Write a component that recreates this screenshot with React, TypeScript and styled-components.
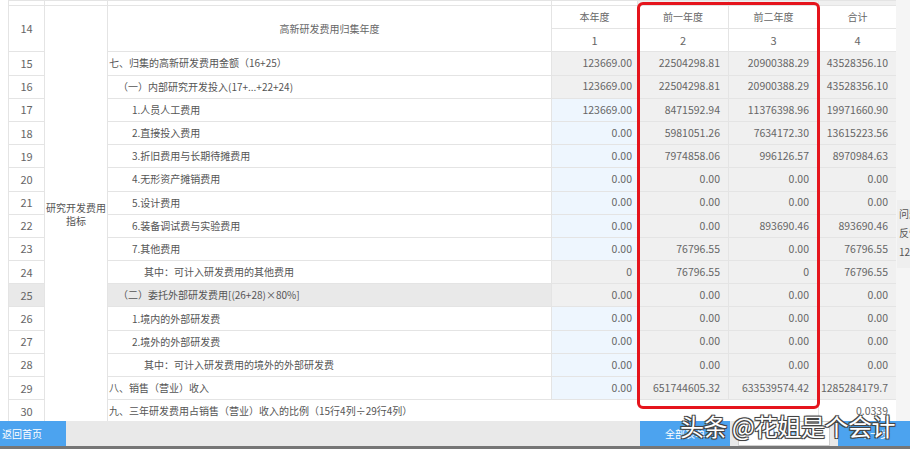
import React from 'react';
import styled, { createGlobalStyle } from 'styled-components';

const GlobalStyle = createGlobalStyle`
  html, body {
    margin: 0;
    padding: 0;
    overflow: hidden;
    background: #ffffff;
  }
  body {
    font-family: "Noto Sans CJK SC", "Noto Sans", sans-serif;
  }
`;

const Page = styled.div`
  position: relative;
  width: 910px;
  height: 449px;
  display: flex;
  flex-direction: column;
  overflow: hidden;
  background: #ffffff;
`;

const Main = styled.div`
  height: 421px;
  display: flex;
  overflow: hidden;
`;

const SheetWrap = styled.div`
  flex: none;
  width: 888px;
  padding-left: 8px;
`;

const Gutter = styled.div`
  flex: 1;
  background: #f5f5f5;
`;

const Sheet = styled.table`
  width: 888px;
  border-collapse: collapse;
  table-layout: fixed;
  color: #666;
`;

type Tone = 'white' | 'gray' | 'blue' | 'dark';

const toneColor: Record<Tone, string> = {
  white: '#ffffff',
  gray: '#f0f0f0',
  blue: '#eef6fe',
  dark: '#e9e9e9',
};

const Row = styled.tr<{ $h?: number }>`
  height: ${(p) => p.$h ?? 23.2}px;
`;

const Cell = styled.td<{ $tone?: Tone; $align?: 'left' | 'center' | 'right'; $pad?: number }>`
  border: 1px solid #e4e4e4;
  padding: 0 ${(p) => (p.$align === 'right' ? p.$pad ?? 8 : 0)}px 0
    ${(p) => (p.$align === 'left' ? p.$pad ?? 0 : 0)}px;
  background: ${(p) => toneColor[p.$tone ?? 'white']};
  text-align: ${(p) => p.$align ?? 'center'};
  font-size: 10.5px;
  line-height: 1;
  white-space: nowrap;
  overflow: hidden;
  color: #666;
`;

const NoCell = styled(Cell)`
  font-size: 11px;
  color: #666;
`;

const LabelCell = styled(Cell)`
  font-size: 10px;
  color: #555;
`;

const HeadCell = styled(Cell)`
  font-size: 10px;
  color: #666;
`;

const GroupCell = styled(Cell)`
  font-size: 10px;
  color: #555;
  white-space: normal;
  line-height: 13px;
  vertical-align: middle;
`;

const BottomBar = styled.div`
  height: 25px;
  display: flex;
  align-items: stretch;
  background: #e9e9e9;
`;

const Taskline = styled.div`
  height: 3px;
  background: #767676;
`;

const Button = styled.button<{ $light?: boolean; $w: number }>`
  width: ${(p) => p.$w}px;
  border: ${(p) => (p.$light ? '1px solid #cfcfcf' : 'none')};
  background: ${(p) => (p.$light ? '#ffffff' : '#4ca3ef')};
  color: ${(p) => (p.$light ? '#4ca3ef' : '#ffffff')};
  font-family: inherit;
  font-size: 10px;
  padding: 0;
  cursor: pointer;
`;

const HomeButton = styled(Button)`
  text-align: left;
  padding-left: 2px;
`;

const Spacer = styled.div`
  flex: 1;
`;

const RightButtons = styled.div`
  display: flex;
  gap: 8px;
  margin-right: -2px;
`;

const Highlight = styled.div`
  position: absolute;
  left: 637px;
  top: 2px;
  width: 177px;
  height: 401px;
  border: 3px solid #e5141c;
  border-radius: 6px;
  pointer-events: none;
`;

const SideTab = styled.div`
  position: absolute;
  left: 897px;
  top: 200px;
  width: 30px;
  height: 68px;
  padding: 4px 0 0 2px;
  box-sizing: border-box;
  background: #efefef;
  color: #555;
  font-size: 10px;
  line-height: 19px;
`;

const Watermark = styled.div`
  position: absolute;
  left: 680px;
  top: 410px;
  font-size: 24px;
  line-height: 32px;
  color: #ffffff;
  white-space: nowrap;
  letter-spacing: -0.5px;
  text-shadow: -1px -1px 0 #444, 1px -1px 0 #444, -1px 1px 0 #444, 1px 1px 0 #444,
    0 0 2px #333;
  pointer-events: none;
`;

type Line = {
  no: number;
  label: string;
  level: number;
  values: [string, string, string, string];
  own?: boolean;
  shaded?: boolean;
};

const lines: Line[] = [
  { no: 15, label: '七、归集的高新研发费用金额（16+25）', level: 0, values: ['123669.00', '22504298.81', '20900388.29', '43528356.10'] },
  { no: 16, label: '（一）内部研究开发投入(17+...+22+24)', level: 1, values: ['123669.00', '22504298.81', '20900388.29', '43528356.10'] },
  { no: 17, label: '1.人员人工费用', level: 2, own: true, values: ['123669.00', '8471592.94', '11376398.96', '19971660.90'] },
  { no: 18, label: '2.直接投入费用', level: 2, own: true, values: ['0.00', '5981051.26', '7634172.30', '13615223.56'] },
  { no: 19, label: '3.折旧费用与长期待摊费用', level: 2, own: true, values: ['0.00', '7974858.06', '996126.57', '8970984.63'] },
  { no: 20, label: '4.无形资产摊销费用', level: 2, own: true, values: ['0.00', '0.00', '0.00', '0.00'] },
  { no: 21, label: '5.设计费用', level: 2, own: true, values: ['0.00', '0.00', '0.00', '0.00'] },
  { no: 22, label: '6.装备调试费与实验费用', level: 2, own: true, values: ['0.00', '0.00', '893690.46', '893690.46'] },
  { no: 23, label: '7.其他费用', level: 2, own: true, values: ['0.00', '76796.55', '0.00', '76796.55'] },
  { no: 24, label: '其中：可计入研发费用的其他费用', level: 3, values: ['0', '76796.55', '0', '76796.55'] },
  { no: 25, label: '（二）委托外部研发费用[(26+28)×80%]', level: 1, shaded: true, values: ['0.00', '0.00', '0.00', '0.00'] },
  { no: 26, label: '1.境内的外部研发费', level: 2, own: true, values: ['0.00', '0.00', '0.00', '0.00'] },
  { no: 27, label: '2.境外的外部研发费', level: 2, own: true, values: ['0.00', '0.00', '0.00', '0.00'] },
  { no: 28, label: '其中：可计入研发费用的境外的外部研发费', level: 3, own: true, values: ['0.00', '0.00', '0.00', '0.00'] },
  { no: 29, label: '八、销售（营业）收入', level: 0, own: true, values: ['0.00', '651744605.32', '633539574.42', '1285284179.7'] },
];

const indent = [1, 10, 24, 36];
const colWidths = [36, 63, 444, 86, 91, 90, 78];
const valuePad = [5, 8, 9, 8];

export default function App() {
  return (
    <Page>
      <GlobalStyle />
      <Main>
        <SheetWrap>
          <Sheet>
            <colgroup>
              {colWidths.map((w, i) => (
                <col key={i} style={{ width: w }} />
              ))}
            </colgroup>
            <tbody>
              <Row $h={5}>
                <Cell />
                <Cell />
                <Cell />
                <Cell />
                <Cell $tone="gray" />
                <Cell $tone="gray" />
                <Cell $tone="gray" />
              </Row>
              <Row>
                <NoCell rowSpan={2}>14</NoCell>
                <GroupCell rowSpan={18}>研究开发费用指标</GroupCell>
                <HeadCell rowSpan={2}>高新研发费用归集年度</HeadCell>
                <HeadCell>本年度</HeadCell>
                <HeadCell>前一年度</HeadCell>
                <HeadCell>前二年度</HeadCell>
                <HeadCell>合计</HeadCell>
              </Row>
              <Row>
                <NoCell>1</NoCell>
                <NoCell>2</NoCell>
                <NoCell>3</NoCell>
                <NoCell>4</NoCell>
              </Row>
              {lines.map((l) => (
                <Row key={l.no}>
                  <NoCell $tone={l.shaded ? 'dark' : 'white'}>{l.no}</NoCell>
                  <LabelCell $align="left" $pad={indent[l.level]} $tone={l.shaded ? 'dark' : 'white'}>
                    {l.label}
                  </LabelCell>
                  {l.values.map((v, i) => (
                    <Cell key={i} $align="right" $pad={valuePad[i]} $tone={i === 0 && l.own ? 'blue' : 'gray'}>
                      {v}
                    </Cell>
                  ))}
                </Row>
              ))}
              <Row>
                <NoCell>30</NoCell>
                <LabelCell $align="left" $pad={1} colSpan={4}>
                  九、三年研发费用占销售（营业）收入的比例（15行4列÷29行4列）
                </LabelCell>
                <Cell $align="right" $pad={8}>0.0339</Cell>
              </Row>
            </tbody>
          </Sheet>
        </SheetWrap>
        <Gutter />
      </Main>
      <BottomBar>
        <HomeButton $w={66}>返回首页</HomeButton>
        <Spacer />
        <RightButtons>
          <Button $w={90}>全部表单</Button>
          <Button $w={92} $light>上一步</Button>
          <Button $w={74}>下一步</Button>
        </RightButtons>
      </BottomBar>
      <Taskline />
      <Highlight />
      <SideTab>
        问题
        <br />
        反馈
        <br />
        12366
      </SideTab>
      <Watermark>头条 @花姐是个会计</Watermark>
    </Page>
  );
}
